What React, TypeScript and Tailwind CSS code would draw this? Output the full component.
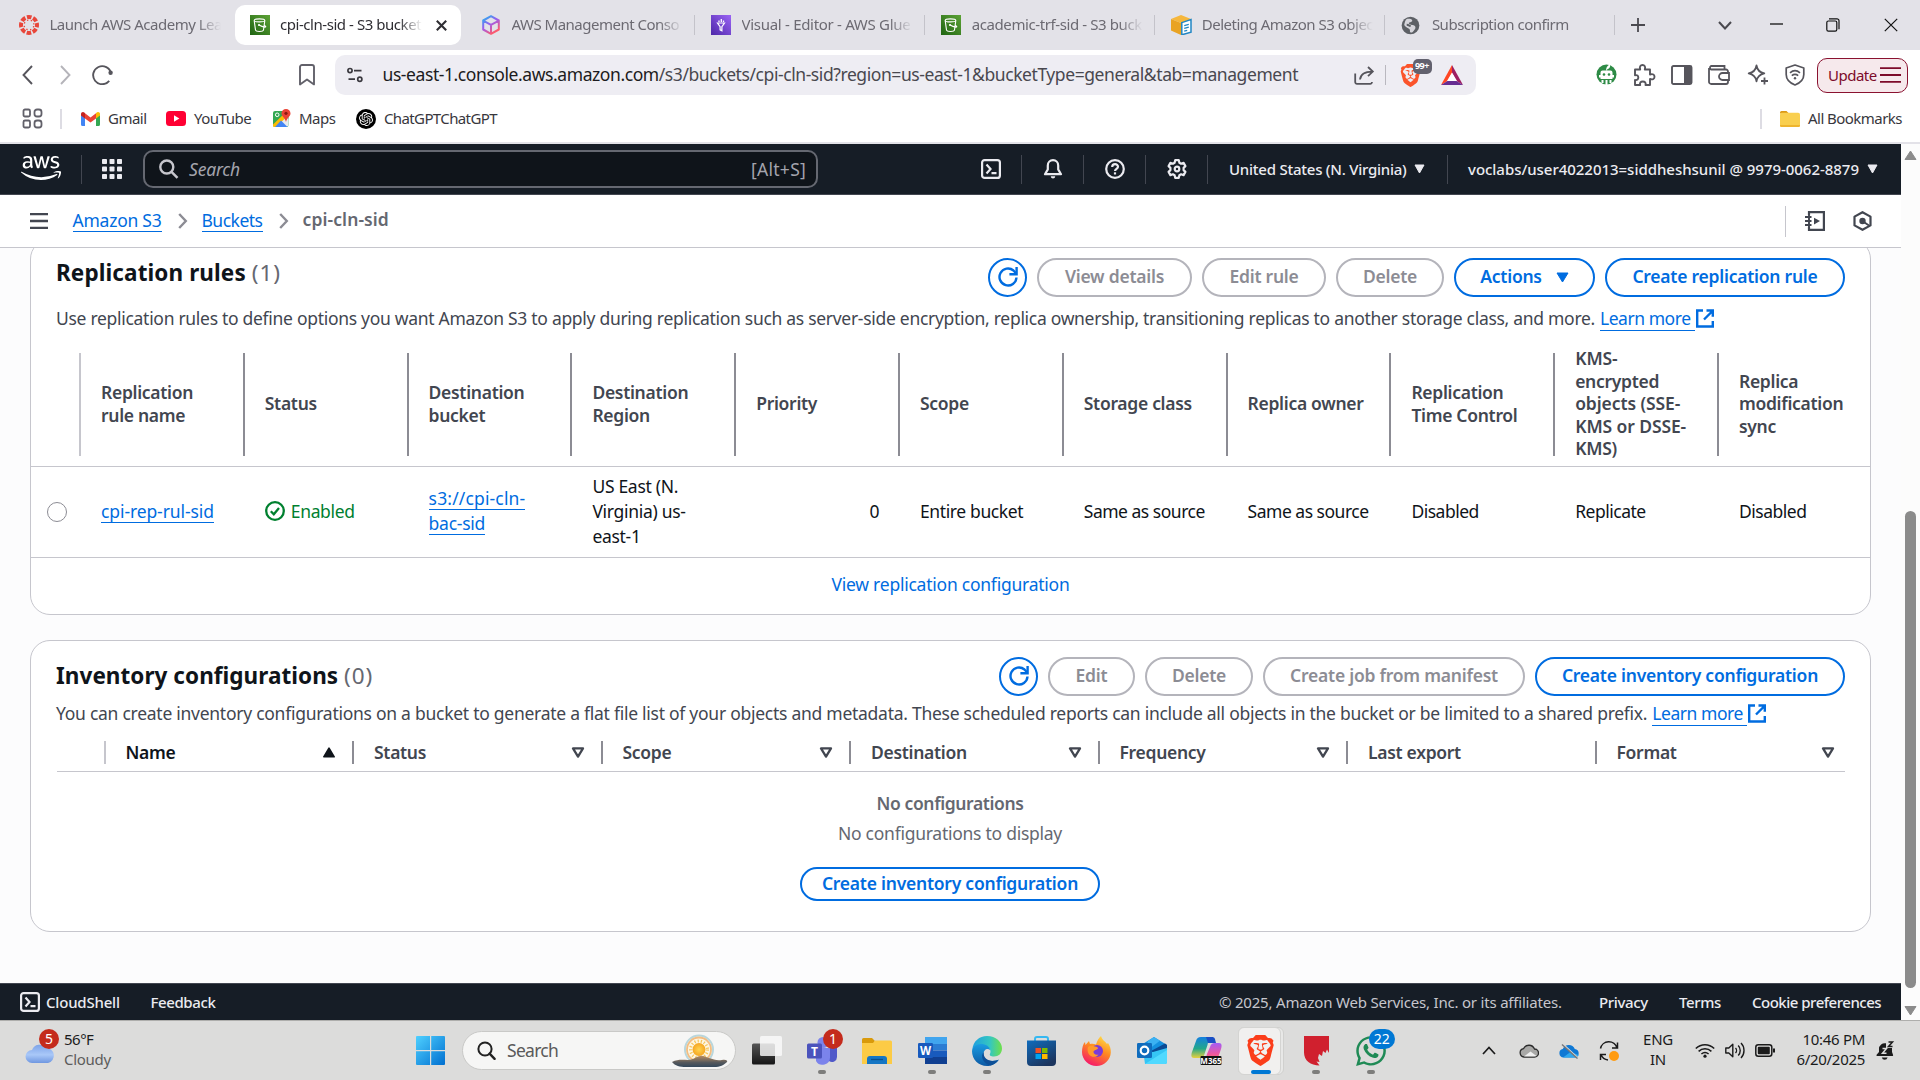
import type { ReactNode } from 'react';
import { FaAws, FaWhatsapp } from 'react-icons/fa6';
import { SiBrave, SiOpenai } from 'react-icons/si';

/* ---------- favicons ---------- */

const CanvasIcon = () => (
  <svg width="20" height="20" viewBox="0 0 20 20" fill="none">
    <circle cx="10" cy="10" r="8" stroke="#e8463a" strokeWidth="4" strokeDasharray="4.6 1.68" strokeDashoffset="2.3" />
    <circle cx="10" cy="10" r="4.9" stroke="#e8463a" strokeWidth="1.3" strokeDasharray="1.3 2.55" strokeDashoffset="2.6" />
  </svg>
);

const BucketIcon = () => (
  <svg width="20" height="20" viewBox="0 0 20 20" fill="none">
    <defs>
      <linearGradient id="bk" x1="0" y1="1" x2="1" y2="0">
        <stop stopColor="#1f6412" />
        <stop offset="1" stopColor="#5da336" />
      </linearGradient>
    </defs>
    <rect width="20" height="20" fill="url(#bk)" />
    <ellipse cx="9.5" cy="5.4" rx="5.3" ry="1.5" stroke="#fff" strokeWidth="1.1" />
    <path d="M4.2 5.6l1.3 9.4c.3 1.9 7.7 1.9 8 0l1.3-9.4" stroke="#fff" strokeWidth="1.1" />
    <path d="M8.5 9.8c2 1.2 4.5 2.2 6.5 2.3 1.4 0 .8-1.2-.9-1.9" stroke="#fff" strokeWidth="1.1" />
    <circle cx="9" cy="10" r="1" fill="#fff" />
  </svg>
);

const ConsoleIcon = () => (
  <svg width="20" height="20" viewBox="0 0 20 20" fill="none">
    <defs>
      <linearGradient id="cs" x1="0" y1="0" x2=".6" y2="1">
        <stop stopColor="#18b8f0" />
        <stop offset=".5" stopColor="#9a5cf0" />
        <stop offset="1" stopColor="#ff5a6a" />
      </linearGradient>
    </defs>
    <path d="M10 1.2l7.8 4.3v9L10 18.8 2.2 14.5v-9z M2.6 5.8l7.4 4 7.4-4M10 9.8v8.6" stroke="url(#cs)" strokeWidth="2" strokeLinejoin="round" />
  </svg>
);

const GlueIcon = () => (
  <svg width="20" height="20" viewBox="0 0 20 20" fill="none">
    <defs>
      <linearGradient id="gl" x1="0" y1="1" x2="1" y2="0">
        <stop stopColor="#4d27a8" />
        <stop offset="1" stopColor="#9b63f5" />
      </linearGradient>
    </defs>
    <rect width="20" height="20" fill="url(#gl)" />
    <path d="M6.5 8h7l-2.6 3.600v4.200l-1.800-.9v-3.300z" stroke="#fff" strokeWidth="1.2" />
    <path d="M8 5.500v1.500M10.300 4v3M12.500 5.500v1.500" stroke="#fff" strokeWidth="1.300" />
  </svg>
);

const DocsIcon = () => (
  <svg width="21" height="20" viewBox="0 0 21 20">
    <path d="M10 0l10 4-10 4L0 4z" fill="#f6b73c" />
    <path d="M0 4l10 4v12L0 15.5z" fill="#e9a323" />
    <path d="M10 8l10-4v6H10z" fill="#f0ab2c" />
    <path d="M10.8 7.6L20 4.6v12.6l-9.2 2.6z" fill="#fff" stroke="#2286c3" strokeWidth="1.5" />
    <path d="M13.2 10.6l4.6-1.2M13.2 13.4l4.6-1.2M13.2 16.2l3-.8" stroke="#2286c3" strokeWidth="1.3" />
  </svg>
);

const GlobeIcon = () => (
  <svg width="19" height="19" viewBox="0 0 20 20">
    <circle cx="10" cy="10" r="9.3" fill="#5d6065" />
    <path d="M6 3.2c2-.6 5-.2 5.8 1.2.5 1.6-1.7 1.8-3 2.4-1.5.8.2 2 1.8 2.3 2.4.3 5 1 4.6 3.4-.3 1.6-1.8 2.8-3.2 4.6-1 .6-2.6.2-2.6-.6.2-1.6 0-2.7-1.4-3.4-1.8-1-3.8-2-4.6-3.6C3.8 7 4.5 4 6 3.2z" fill="#e3e2e8" opacity=".9" />
    <path d="M6 9.2c2 0 3 1.2 4.2 1.5" stroke="#5d6065" strokeWidth="2" fill="none" />
  </svg>
);

/* ---------- browser chrome ---------- */

function Tab({ icon, title, tone, sep }: { icon: ReactNode; title: string; tone: string; sep?: boolean }) {
  return (
    <div className="flex h-full w-[230.1px] shrink-0 items-center pl-4">
      <div className="w-[30.500px] shrink-0">{icon}</div>
      <div className={`-mt-px w-[171.500px] shrink-0 overflow-hidden whitespace-nowrap text-[15px] text-[#6c6a72] [mask-image:linear-gradient(to_right,black_86%,transparent)] ${tone}`}>{title}</div>
      {sep && <div className="ml-[11px] h-5 w-px shrink-0 bg-[#c4c3ca]" />}
    </div>
  );
}

function TabStrip() {
  return (
    <div className="flex h-[50px] items-center bg-[#e3e2e8]">
      <div className="h-full w-[235px] shrink-0 pl-[3px]">
        <Tab icon={<CanvasIcon />} title="Launch AWS Academy Lea" tone="tracking-[-0.5px]" />
      </div>
      <div className="flex h-10 w-[226px] shrink-0 items-center rounded-[10px] bg-white pl-[15px]">
        <div className="w-[30px] shrink-0"><BucketIcon /></div>
        <div className="-mt-px w-[142px] overflow-hidden whitespace-nowrap text-[15px] tracking-[-0.45px] text-[#2f2e33] [mask-image:linear-gradient(to_right,black_84%,transparent)]">cpi-cln-sid - S3 bucket</div>
        <svg className="ml-[14px]" width="11" height="11" viewBox="0 0 11 11" stroke="#2f2e33" strokeWidth="2.1"><path d="M.8.8l9.4 9.4M10.2.8L.8 10.2" /></svg>
      </div>
      <div className="w-[4px] shrink-0" />
      <Tab icon={<ConsoleIcon />} title="AWS Management Conso" tone="tracking-[-0.5px]" sep />
      <Tab icon={<GlueIcon />} title="Visual - Editor - AWS Glue" tone="tracking-[-0.3px]" sep />
      <Tab icon={<BucketIcon />} title="academic-trf-sid - S3 buck" tone="tracking-[-0.4px]" sep />
      <Tab icon={<DocsIcon />} title="Deleting Amazon S3 objec" tone="tracking-[-0.5px]" sep />
      <Tab icon={<GlobeIcon />} title="Subscription confirm" tone="tracking-[-0.49px]" sep />
      <svg className="ml-4 shrink-0" width="14" height="14" viewBox="0 0 14 14" stroke="#4a494f" strokeWidth="1.8"><path d="M7 0v14M0 7h14" /></svg>
      <svg className="ml-[73px] shrink-0" width="14" height="9" viewBox="0 0 14 9" fill="none" stroke="#4a494f" strokeWidth="2"><path d="M1 1l6 6.5L13 1" /></svg>
      <svg className="-mt-[3px] ml-[38px] shrink-0" width="13" height="2" viewBox="0 0 13 2"><path d="M0 1h13" stroke="#111" strokeWidth="1.3" /></svg>
      <svg className="ml-[43px] shrink-0" width="14" height="14" viewBox="0 0 14 14" fill="none" stroke="#111" strokeWidth="1.2"><rect x=".8" y="3" width="10" height="10.2" rx="1.6" /><path d="M3 .8h8a2 2 0 012 2v8.4" /></svg>
      <svg className="ml-[44px] shrink-0" width="14" height="14" viewBox="0 0 14 14" stroke="#111" strokeWidth="1.2"><path d="M.8.8l12.4 12.4M13.2.8L.8 13.2" /></svg>
    </div>
  );
}

const BatIcon = () => (
  <svg width="22" height="20" viewBox="0 0 22 20">
    <path d="M11 0L0 20l6.5-4L11 8z" fill="#ff4724" />
    <path d="M11 0l11 20-6.5-4L11 8z" fill="#9e1f63" />
    <path d="M0 20h22l-6.5-4h-9z" fill="#662d91" />
    <path d="M11 7.4l5 8.6H6z" fill="#fff" />
  </svg>
);

function Toolbar() {
  return (
    <div className="flex h-[50px] items-center bg-white">
      <svg className="ml-[22px]" width="11" height="20" viewBox="0 0 11 20" fill="none" stroke="#56555c" strokeWidth="1.9"><path d="M10 1L1.5 10l8.5 9" /></svg>
      <svg className="ml-[27px]" width="11" height="20" viewBox="0 0 11 20" fill="none" stroke="#b5b4ba" strokeWidth="1.9"><path d="M1 1l8.5 9L1 19" /></svg>
      <svg className="ml-[21px]" width="22" height="20" viewBox="0 0 22 20" fill="none" stroke="#56555c" strokeWidth="1.9"><path d="M17.2 15.8A9 9 0 1119 8.5" /><circle cx="18.6" cy="7.8" r="2.2" fill="#56555c" stroke="none" /></svg>
      <svg className="ml-[185px]" width="16" height="22" viewBox="0 0 16 22" fill="none" stroke="#62616a" strokeWidth="1.9"><path d="M1 3a2 2 0 012-2h10a2 2 0 012 2v17.4l-7-5-7 5z" strokeLinejoin="round" /></svg>
      <div className="ml-5 flex h-10 w-[1141px] shrink-0 items-center rounded-[10px] bg-[#eeedf3] pl-[12px]">
        <svg width="16" height="16" viewBox="0 0 16 16" fill="none" stroke="#3a393f" strokeWidth="1.7"><circle cx="3" cy="3.6" r="2.1" /><path d="M7 3.6h7.5M1.5 12.2H8" /><circle cx="12.8" cy="12.2" r="2.1" /></svg>
        <div className="-mt-px ml-[19.500px] w-[971px] whitespace-nowrap text-[17.5px] tracking-[-0.42px] text-[#49484f]"><span className="text-[#1c1b20]">us-east-1.console.aws.amazon.com</span>/s3/buckets/cpi-cln-sid?region=us-east-1&amp;bucketType=general&amp;tab=management</div>
        <svg width="21" height="19" viewBox="0 0 21 19" fill="none" stroke="#56555c" strokeWidth="1.8"><path d="M1.2 7.5V16a1.8 1.8 0 001.8 1.8h13A1.8 1.8 0 0018 16" /><path d="M6 13.5C6.500 8 10 5.600 18.500 5.600M14 1l4.800 4.600L14 10.200" /></svg>
        <div className="ml-[10px] h-5 w-px bg-[#b9b8bf]" />
        <div className="relative ml-[13px]">
          <SiBrave size={23} color="#fb542b" />
          <span className="absolute -top-[5px] left-[14px] flex h-[15px] w-[19px] items-center justify-center rounded-[5px] bg-[#62616e] text-[9px] font-bold tracking-[-0.4px] text-white">99+</span>
        </div>
        <div className="ml-[19px]"><BatIcon /></div>
      </div>
      <svg className="ml-[120px]" width="21" height="22" viewBox="0 0 21 22"><circle cx="10.500" cy="10.500" r="10" fill="#2e8b46" /><path d="M10.200 6.500c-.2-3 1.300-5.500 4-5.800.3 2.600-1.300 4.300-3 4.500v1.300z" fill="#fff" /><path d="M6.500 6.500h8a2 2 0 012 2V11h1.500v2.500h-1.500V15H4.500v-1.500H3V11h1.500V8.500a2 2 0 012-2z" fill="#fff" /><path d="M5.500 16h2v3h-2zM9.500 16h2v5h-2zM13.500 16h2v3h-2z" fill="#fff" /><circle cx="8" cy="10.500" r="1.300" fill="#2e8b46" /><circle cx="13" cy="10.500" r="1.300" fill="#2e8b46" /></svg>
      <svg className="ml-4" width="23" height="22" viewBox="0 0 23 22" fill="none" stroke="#56555c" strokeWidth="1.9"><path d="M2 5.500h5.200C6.200 2.500 7.500 1 9.500 1s3.300 1.500 2.300 4.500H17v5c3-1 4.500.2 4.500 2.200S20 16 17 15v6h-4.500c.6-2.300-.6-3.500-2.700-3.500S6.500 18.700 7.200 21H2v-5c2.300.4 3.300-.8 3.300-2.500S4.300 10.700 2 11.200z" strokeLinejoin="round" /></svg>
      <svg className="ml-[15px]" width="22" height="20" viewBox="0 0 22 20"><rect x="1" y="1" width="19.500" height="18" rx="1.500" fill="none" stroke="#56555c" strokeWidth="1.900" /><path d="M13 1h7v18h-7z" fill="#56555c" /></svg>
      <svg className="ml-[15px]" width="22" height="20" viewBox="0 0 22 20" fill="none" stroke="#56555c" strokeWidth="1.800"><path d="M20 8V6.500a2 2 0 00-2-2H3A2 2 0 013 1h13.500v3M1 3v13.500A2.300 2.300 0 003.300 19H18a2 2 0 002-2v-2" /><path d="M21 8h-6.500a3.500 3.500 0 000 7H21z" /></svg>
      <svg className="ml-[17px]" width="22" height="22" viewBox="0 0 22 22" fill="none" stroke="#56555c" strokeWidth="1.800"><path d="M9.500 1.500c.8 4.800 2.700 6.900 7.800 7.900-5.100 1-7 3.100-7.800 7.900C8.700 12.500 6.800 10.400 1.700 9.400c5.100-1 7-3.100 7.800-7.900z" strokeLinejoin="round" /><path d="M17.500 13.500v7M14 17h7" /></svg>
      <svg className="ml-[16px]" width="20" height="22" viewBox="0 0 20 22" fill="none" stroke="#56555c" strokeWidth="1.700"><path d="M10 1l8.800 3v6.500c0 5-3.800 8.500-8.800 10.500C5 19 1.200 15.500 1.200 10.500V4z" strokeLinejoin="round" /><path d="M5 8.800c3-2.500 7-2.500 10 0M6.800 11.600c2-1.600 4.400-1.600 6.400 0" /><circle cx="10" cy="14.300" r="1.200" fill="#56555c" stroke="none" /></svg>
      <div className="ml-[12px] flex h-[35px] w-[91px] items-center rounded-[10px] border-[1.5px] border-[#8a1230] bg-[#f6e9ec] pl-[10px]">
        <span className="w-[52px] text-[15px] tracking-[-0.5px] text-[#7d0b2a]">Update</span>
        <svg width="21" height="16" viewBox="0 0 21 16" stroke="#7d0b2a" strokeWidth="1.800"><path d="M0 1.200h21M0 8h21M0 14.800h21" /></svg>
      </div>
    </div>
  );
}

function Bookmarks() {
  return (
    <div className="flex h-[44px] items-center border-b-2 border-[#e3e2e8] bg-white pb-[5px] text-[15px] tracking-[-0.5px] text-[#38373d]">
      <svg className="ml-[22px]" width="21" height="21" viewBox="0 0 21 21" fill="none" stroke="#62616a" strokeWidth="1.800"><rect x="1.500" y="1.500" width="6.500" height="7" rx="1.500" /><rect x="12.500" y="1.500" width="7" height="7" rx="2.500" /><rect x="1.500" y="12.500" width="6.500" height="7" rx="1.500" /><rect x="12.500" y="12.500" width="7" height="7" rx="2.500" /></svg>
      <div className="ml-[17px] h-5 w-[2px] bg-[#dddce3]" />
      <svg className="ml-[19px]" width="19" height="14" viewBox="0 0 19 14"><path d="M0 1.500v11A1.500 1.500 0 001.500 14H4V3.200z" fill="#4285f4" /><path d="M15 3.200V14h2.500a1.500 1.500 0 001.500-1.500v-11z" fill="#34a853" /><path d="M15 1.200v5.200l4-3V2c0-2-2.200-2.600-3.600-1.300z" fill="#fbbc04" /><path d="M4 6.400V1.200l5.500 4.200L15 1.200v5.200l-5.500 4.200z" fill="#ea4335" /><path d="M0 2v1.400l4 3V1.200L3.600.7C2.200-.6 0 0 0 2z" fill="#c5221f" /></svg>
      <span className="ml-[8px] w-[58px]">Gmail</span>
      <svg width="20" height="15" viewBox="0 0 20 15"><rect width="20" height="15" rx="3.500" fill="#ff0033" /><path d="M8 4.300l5.400 3.200L8 10.700z" fill="#fff" /></svg>
      <span className="ml-[8px] w-[79px]">YouTube</span>
      <svg width="18" height="19" viewBox="0 0 18 19"><rect y="2" width="15.500" height="16" rx="2" fill="#34a853" /><path d="M1 18L12 7l3.500 3v6.500l-2 1.500z" fill="#e8eaed" /><path d="M0 15.500L12.500 3.500l2.500 3.300L3 18H1.500A1.500 1.500 0 010 16.500z" fill="#fbbc04" /><path d="M8 11.500l6.500 6.500H2z" fill="#4285f4" /><circle cx="4.200" cy="5.800" r="1.800" fill="none" stroke="#fff" /><path d="M13 0a4.500 4.500 0 00-4.500 4.500C8.500 7.500 12 8.500 13 13c1-4.500 4.500-5.500 4.500-8.500A4.500 4.500 0 0013 0z" fill="#ea4335" /><circle cx="13" cy="4.300" r="1.600" fill="#8c1a10" /></svg>
      <span className="ml-[8px] w-[57px]">Maps</span>
      <div className="flex size-5 items-center justify-center rounded-full bg-black"><SiOpenai size={14} color="#fff" /></div>
      <span className="ml-[8px] tracking-[-0.62px]">ChatGPTChatGPT</span>
      <div className="ml-auto h-5 w-[2px] bg-[#dddce3]" />
      <svg className="ml-[18px]" width="20" height="16" viewBox="0 0 20 16"><path d="M0 1.500A1.500 1.500 0 011.500 0h5L9 2.500H0z" fill="#dc9a15" /><rect y="1.800" width="20" height="14.200" rx="1.800" fill="#f9cf4f" /><path d="M0 14h20v.5a1.500 1.500 0 01-1.500 1.500h-17A1.500 1.500 0 010 14.500z" fill="#eeb52f" /></svg>
      <span className="mr-[18px] ml-[8px] w-[94px] whitespace-nowrap tracking-[-0.54px]">All Bookmarks</span>
    </div>
  );
}

/* ---------- console header ---------- */

const ShellIcon = () => (
  <svg width="20" height="20" viewBox="0 0 20 20" fill="none" stroke="#ebebf0" strokeWidth="2.200"><rect x="1.100" y="1.100" width="17.800" height="17.800" rx="2.500" /><path d="M5.500 5.500L9.500 10l-4 4.500M10.500 14.200h5" /></svg>
);
const Sep = ({ className }: { className: string }) => <div className={`h-[29px] w-px shrink-0 bg-[#424650] ${className}`} />;
const Caret = ({ color = '#ebebf0' }: { color?: string }) => (
  <svg width="11" height="10" viewBox="0 0 11 10"><path d="M1 1h9L5.500 9z" fill={color} stroke={color} strokeLinejoin="round" /></svg>
);

function ConsoleHeader() {
  return (
    <div className="flex h-[51px] items-center border-b border-[#424650] bg-[#161d26] text-[15px] font-medium text-[#ebebf0]">
      <FaAws className="-mt-[2px] ml-[21px]" size={40} color="#fff" />
      <Sep className="ml-[20px]" />
      <svg className="ml-[20px]" width="20" height="20" viewBox="0 0 20 20" fill="#ebebf0">
        {[0, 7.5, 15].map((y) => [0, 7.5, 15].map((x) => <rect key={`${x}-${y}`} x={x} y={y} width="5" height="5" rx=".8" />))}
      </svg>
      <div className="ml-[21px] flex h-[38px] w-[675px] items-center rounded-[10px] border-2 border-[#656871] bg-[#0f141a] pr-[10px] pl-[14px] text-[17.5px] font-normal text-[#a4a4ad]">
        <svg width="20" height="20" viewBox="0 0 20 20" fill="none" stroke="#c6c6cd" strokeWidth="2.400"><circle cx="7.800" cy="8" r="6.500" /><path d="M12.500 12.800l6 6" /></svg>
        <span className="ml-[10px] italic tracking-[-0.2px]">Search</span>
        <span className="ml-auto tracking-[0.25px]">[Alt+S]</span>
      </div>
      <div className="ml-[163px]"><ShellIcon /></div>
      <Sep className="ml-5" />
      <svg className="ml-[21px]" width="20" height="20" viewBox="0 0 20 20" fill="none" stroke="#ebebf0" strokeWidth="2.200" strokeLinejoin="round"><path d="M10 1.200c-3 0-5.200 2.200-5.200 5.200v4L2 15.200h16l-2.800-4.800v-4c0-3-2.200-5.200-5.200-5.200z" /><path d="M7.800 16.500c0 3 4.400 3 4.400 0z" fill="#ebebf0" stroke="none" transform="translate(0 .8)" /></svg>
      <Sep className="ml-5" />
      <svg className="ml-[21px]" width="20" height="20" viewBox="0 0 20 20" fill="none" stroke="#ebebf0" strokeWidth="2.200"><circle cx="10" cy="10" r="8.800" /><path d="M7.200 8c0-3.800 5.800-3.600 5.800-.3 0 2-3 2.200-3 4.300" /><path d="M10 13.300v2.200" /></svg>
      <Sep className="ml-5" />
      <svg className="ml-[21px]" width="20" height="20" viewBox="0 0 20 20" fill="none" stroke="#ebebf0" strokeWidth="2.200" strokeLinejoin="round"><path d="M8.200 1.200h3.600l.6 2.500 1.700 1 2.500-.8 1.800 3.200-1.800 1.800v2.200l1.800 1.800-1.800 3.200-2.500-.8-1.700 1-.6 2.500H8.200l-.6-2.500-1.700-1-2.500.8-1.800-3.200 1.800-1.800V8.900L1.600 7.100l1.800-3.200 2.500.8 1.700-1z" /><circle cx="10" cy="10" r="2.300" /></svg>
      <Sep className="ml-5" />
      <span className="ml-[21px] w-[185px] whitespace-nowrap tracking-[-0.24px]">United States (N. Virginia)</span>
      <Caret />
      <Sep className="ml-[22px]" />
      <span className="ml-[20px] w-[399px] whitespace-nowrap tracking-[-0.03px]">voclabs/user4022013=siddheshsunil @ 9979-0062-8879</span>
      <Caret />
    </div>
  );
}

const Chevron = () => (
  <svg width="10" height="16" viewBox="0 0 10 16" fill="none" stroke="#8c8c94" strokeWidth="2.400"><path d="M1.200 1l6.600 7-6.600 7" /></svg>
);

function Breadcrumbs() {
  return (
    <div className="flex h-[53px] items-center border-b border-[#c6c6cd] bg-white text-[17.5px]">
      <svg className="ml-[30px]" width="18" height="16" viewBox="0 0 18 16" stroke="#424650" strokeWidth="2.300"><path d="M0 1.200h18M0 8h18M0 14.800h18" /></svg>
      <a className="-mt-px ml-[24.500px] w-[89px] border-b border-[#006ce0] leading-[21px] whitespace-nowrap tracking-[-0.24px] text-[#006ce0]">Amazon S3</a>
      <div className="ml-[16px]"><Chevron /></div>
      <a className="-mt-px ml-[14px] w-[61px] border-b border-[#006ce0] leading-[21px] whitespace-nowrap tracking-[-0.5px] text-[#006ce0]">Buckets</a>
      <div className="ml-[16px]"><Chevron /></div>
      <span className="-mt-[3px] ml-[14px] font-semibold tracking-[0.1px] text-[#656871]">cpi-cln-sid</span>
      <div className="ml-auto h-[31px] w-px bg-[#c6c6cd]" />
      <svg className="ml-[19px]" width="20" height="20" viewBox="0 0 20 20" fill="none" stroke="#424650" strokeWidth="2.200"><path d="M4 4V1.100h14.900v17.800H4V16" /><path d="M0 6h6.500M0 10h6.500M0 14h6.500M4 4v12" strokeWidth="1.900" /><path d="M9 6.800l6 3.200-6 3.400z" fill="#424650" stroke="none" /></svg>
      <svg className="mr-[29px] ml-[28px]" width="19" height="20" viewBox="0 0 19 20" fill="none" stroke="#424650" strokeWidth="2.200" strokeLinejoin="round"><path d="M9.500 1.200l8 4.400v8.800l-8 4.400-8-4.400V5.600z" /><circle cx="9.500" cy="10" r="3.200" fill="#424650" stroke="none" /><path d="M10 10.500l6 4" strokeWidth="2" /></svg>
    </div>
  );
}

/* ---------- page content ---------- */

function Btn({ children, w, primary, small }: { children: ReactNode; w: string; primary?: boolean; small?: boolean }) {
  return (
    <button className={`flex shrink-0 items-center justify-center rounded-[20px] border-[2px] pb-px text-[17.5px] leading-none font-semibold whitespace-nowrap tracking-[-0.24px] ${small ? 'h-[34px]' : 'h-[39px]'} ${w} ${primary ? 'border-[#006ce0] text-[#006ce0]' : 'border-[#b4b4bb] text-[#8c8c94]'}`}>
      {children}
    </button>
  );
}

const RefreshBtn = () => (
  <button className="flex size-[39px] shrink-0 items-center justify-center rounded-full border-2 border-[#006ce0]">
    <svg className="-mt-px" width="20" height="20" viewBox="0 0 20 20" fill="none" stroke="#006ce0" strokeWidth="2.400"><path d="M18.500 10.500a8.500 8.500 0 11-3-7l2.500 2.800" /><path d="M18.600 0v7.200h-7.200" /></svg>
  </button>
);

const LearnMore = () => (
  <a className="ml-[5px] inline-flex text-[#006ce0]">
    <span className="h-[25px] w-[95px] border-b border-[#006ce0] tracking-[-0.45px]">Learn more</span>
    <svg className="mt-[3px] ml-[1px]" width="18" height="19" viewBox="0 0 18 19" fill="none" stroke="#006ce0" strokeWidth="2.400"><path d="M7 1.500H1.200v16h15.600V12M10.500 1.500h6.300v6.300M16.500 2L8 10.500" /></svg>
  </a>
);

function Th({ children, first, line }: { children: ReactNode; first?: boolean; line: string }) {
  return (
    <div className={`flex items-center border-l-2 pl-5 ${line} ${first ? 'border-[#c6c6cd]' : 'border-[#8c8c94]'}`}>{children}</div>
  );
}

const headings: string[][] = [
  ['Replication', 'rule name'], ['Status'], ['Destination', 'bucket'], ['Destination', 'Region'], ['Priority'], ['Scope'],
  ['Storage class'], ['Replica owner'], ['Replication', 'Time Control'],
  ['KMS-', 'encrypted', 'objects (SSE-', 'KMS or DSSE-', 'KMS)'], ['Replica', 'modification', 'sync'],
];

const link = 'w-fit border-b border-[#006ce0] leading-[22px] text-[#006ce0]';

function ReplicationCard() {
  return (
    <section className="flex h-[376px] flex-col rounded-[20px] border border-[#c6c6cd] bg-white">
      <div className="mt-[18px] flex h-[40px] items-start pr-[25px] pl-[25px]">
        <h2 className="text-[22.5px] leading-[30px] font-bold tracking-[0.1px] text-[#0f141a]">Replication rules <span className="font-normal tracking-[1px] text-[#656871]">(1)</span></h2>
        <div className="ml-auto flex gap-[10px]">
          <RefreshBtn />
          <Btn w="w-[155px]">View details</Btn>
          <Btn w="w-[124px]">Edit rule</Btn>
          <Btn w="w-[108px]">Delete</Btn>
          <Btn w="w-[141px]" primary><span className="mr-[14px]">Actions</span><svg width="13" height="11" viewBox="0 0 13 11"><path d="M1 1h11L6.500 10z" fill="#006ce0" stroke="#006ce0" strokeLinejoin="round" /></svg></Btn>
          <Btn w="w-[240px]" primary>Create replication rule</Btn>
        </div>
      </div>
      <p className="mt-[8px] flex h-[25px] pl-[25px] leading-[25px] whitespace-nowrap tracking-[-0.295px] text-[#424650]">
        Use replication rules to define options you want Amazon S3 to apply during replication such as server-side encryption, replica ownership, transitioning replicas to another storage class, and more. <LearnMore />
      </p>
      <div className="mt-[14px] grid h-[122px] grid-cols-[48px_repeat(10,163.800px)_1fr] border-b border-[#c6c6cd] leading-[22.400px] font-semibold tracking-[-0.3px] text-[#424650]">
        <div />
        {headings.map((h, i) => (
          <Th key={i} first={i === 0} line="mt-[8px] h-[103px] pb-[2px]"><div className="whitespace-nowrap">{h.map((l) => <div key={l} className={l.endsWith('-') ? 'tracking-[-0.1px]' : ''}>{l}</div>)}</div></Th>
        ))}
      </div>
      <div className="grid h-[91px] grid-cols-[48px_repeat(10,163.800px)_1fr] items-center border-b border-[#c6c6cd] pb-[2px] leading-[25px] whitespace-nowrap tracking-[-0.49px] text-[#0f141a]">
        <div className="mt-px ml-[16px] size-5 rounded-full border border-[#8c8c94]" />
        <div className="pl-[22px] tracking-[-0.1px]"><div className={link}>cpi-rep-rul-sid</div></div>
        <div className="flex items-center gap-[6px] pl-[22px] tracking-[-0.35px] text-[#00802f]">
          <svg width="20" height="20" viewBox="0 0 20 20" fill="none" stroke="#00802f" strokeWidth="2.300"><circle cx="10" cy="10" r="8.800" /><path d="M5.800 10.200l3 3L14 7" /></svg>Enabled
        </div>
        <div className="flex flex-col gap-[2px] pl-[22px]"><div className={`tracking-[0.15px] ${link}`}>s3://cpi-cln-</div><div className={`tracking-[-0.25px] ${link}`}>bac-sid</div></div>
        <div className="pl-[22px] tracking-[-0.3px]">US East (N.<br />Virginia) us-<br />east-1</div>
        <div className="pr-[19px] text-right">0</div>
        <div className="pl-[22px] tracking-[-0.38px]">Entire bucket</div>
        <div className="pl-[22px]">Same as source</div>
        <div className="pl-[22px]">Same as source</div>
        <div className="pl-[22px]">Disabled</div>
        <div className="pl-[22px]">Replicate</div>
        <div className="pl-[22px]">Disabled</div>
      </div>
      <div className="pt-[14px] text-center leading-[25px] tracking-[-0.24px] text-[#006ce0]">View replication configuration</div>
    </section>
  );
}

const invCols: [string, string][] = [
  ['Name', 'up'], ['Status', 'down'], ['Scope', 'down'], ['Destination', 'down'], ['Frequency', 'down'], ['Last export', ''], ['Format', 'down'],
];

function InventoryCard() {
  return (
    <section className="mt-[25px] flex h-[292px] flex-col rounded-[20px] border border-[#c6c6cd] bg-white">
      <div className="mt-[16px] flex h-[40px] items-start pr-[25px] pl-[25px]">
        <h2 className="mt-[4px] text-[22.5px] leading-[30px] font-bold tracking-[0.05px] text-[#0f141a]">Inventory configurations <span className="font-normal tracking-[0.900px] text-[#656871]">(0)</span></h2>
        <div className="ml-auto flex gap-[10px]">
          <RefreshBtn />
          <Btn w="w-[87px]">Edit</Btn>
          <Btn w="w-[108px]">Delete</Btn>
          <Btn w="w-[262px]">Create job from manifest</Btn>
          <Btn w="w-[310px]" primary>Create inventory configuration</Btn>
        </div>
      </div>
      <p className="mt-[4px] flex h-[25px] pl-[25px] leading-[25px] whitespace-nowrap tracking-[-0.265px] text-[#424650]">
        You can create inventory configurations on a bucket to generate a flat file list of your objects and metadata. These scheduled reports can include all objects in the bucket or be limited to a shared prefix. <LearnMore />
      </p>
      <div className="mr-[25px] ml-[26px] grid h-[46px] grid-cols-[46.500px_repeat(6,248.500px)_1fr] items-center border-b border-[#c6c6cd] pt-[8px] font-semibold text-[#424650]">
        <div />
        {invCols.map(([name, sort], i) => (
          <Th key={name} first={i === 0} line="h-[23px]">
            <span className={`-mt-px leading-[23px] tracking-[-0.3px] ${i === 0 ? 'text-[#0f141a]' : ''}`}>{name}</span>
            {sort && (
              <svg className={`ml-auto ${i === 6 ? 'mr-[10px]' : 'mr-[16px]'}`} width="14" height="11" viewBox="0 0 14 11" strokeLinejoin="round" strokeWidth="2.300">
                {sort === 'up' ? <path d="M7 1.200l5.200 8.600H1.800z" fill="#0f141a" stroke="#0f141a" strokeWidth="1.600" /> : <path d="M7 9.600L2 1.400h10z" fill="none" stroke="#424650" />}
              </svg>
            )}
          </Th>
        ))}
      </div>
      <div className="mt-[19px] flex flex-col items-center pr-px text-[#656871]">
        <div className="leading-[25px] font-semibold tracking-[-0.4px]">No configurations</div>
        <div className="mt-[5px] mb-[21px] leading-[25px] tracking-[-0.26px]">No configurations to display</div>
        <Btn w="w-[300px]" primary small>Create inventory configuration</Btn>
      </div>
    </section>
  );
}

function Footer() {
  return (
    <div className="flex h-[37px] items-center border-t border-[#424650] bg-[#161d26] text-[15px] font-medium whitespace-nowrap text-[#ebebf0]">
      <div className="ml-[20px]"><ShellIcon /></div>
      <span className="ml-[6px] w-[104.500px] tracking-[-0.2px]">CloudShell</span>
      <span className="tracking-[-0.4px]">Feedback</span>
      <span className="ml-auto w-[380px] font-normal tracking-[-0.2px] text-[#c6c6cd]">© 2025, Amazon Web Services, Inc. or its affiliates.</span>
      <span className="w-[80px] tracking-[-0.35px]">Privacy</span>
      <span className="w-[73px] tracking-[-0.4px]">Terms</span>
      <span className="mr-[19px] w-[130px] tracking-[-0.5px]">Cookie preferences</span>
    </div>
  );
}

/* ---------- taskbar ---------- */

function Cell({ children, dot, badge, badgeCls, active }: { children: ReactNode; dot?: boolean; badge?: string; badgeCls?: string; active?: boolean }) {
  return (
    <div className="relative flex h-full w-[54.900px] shrink-0 items-center justify-center">
      {active && <div className="absolute top-[6px] left-[4px] h-[48px] w-[46px] rounded-[6px] border border-[#d0d0ce] bg-[#e8e8e7]" />}
      {active && <div className="absolute top-[6px] left-[4px] h-[48px] w-[43px] rounded-[6px] border border-[#d4d4d2] bg-[#f1f0ef]" />}
      <div className="relative flex items-center justify-center">{children}</div>
      {dot && <div className="absolute bottom-[6px] h-[4px] w-[8px] rounded-full bg-[#7d7d7b]" />}
      {active && <div className="absolute bottom-[6px] left-[17px] h-[4px] w-[20px] rounded-full bg-[#0078d4]" />}
      {badge && <span className={`absolute top-[8px] flex h-[20px] items-center justify-center rounded-full text-[14px] leading-none text-white ${badgeCls}`}>{badge}</span>}
    </div>
  );
}

function Taskbar() {
  return (
    <div className="flex h-[60px] items-center border-t border-[#aeaeac] bg-[#dcdcdb] text-[15px]">
      <div className="relative ml-[25px] w-[30px]">
        <svg className="mt-[4px]" width="30" height="20" viewBox="0 0 30 20"><defs><linearGradient id="cl" x1="0" y1="0" x2="0" y2="1"><stop stopColor="#7ea4e8" /><stop offset=".55" stopColor="#a9c8f8" /><stop offset="1" stopColor="#6f97e0" /></linearGradient></defs><path d="M7 20a6.500 6.500 0 010-13A8 8 0 0121 5a7.600 7.600 0 012 15z" fill="url(#cl)" /></svg>
        <span className="absolute -top-[10px] left-[14px] flex size-[20px] items-center justify-center rounded-full bg-[#c42b1c] text-[14px] text-white">5</span>
      </div>
      <div className="-mt-[4px] ml-[9px] w-[352px] leading-[20px]">
        <div className="tracking-[-0.5px] text-[#1b1b1b]">56°F</div>
        <div className="tracking-[-0.3px] text-[#5c5c5c]">Cloudy</div>
      </div>
      <svg width="29" height="29" viewBox="0 0 29 29"><defs><linearGradient id="wn" x1="0" y1="0" x2="1" y2="1"><stop stopColor="#4fd0ff" /><stop offset="1" stopColor="#006fd0" /></linearGradient></defs><path d="M1 0h13v14H0V1a1 1 0 011-1zM15.200 0H28a1 1 0 011 1v13H15.200zM0 15.200h14V29H1a1 1 0 01-1-1zM15.200 15.200H29V28a1 1 0 01-1 1H15.200z" fill="url(#wn)" /></svg>
      <div className="ml-[17px] flex h-[39px] w-[274px] shrink-0 items-center rounded-full border border-[#c9c9c7] bg-[#f6f6f5] pl-[14px]">
        <svg width="19" height="19" viewBox="0 0 19 19" fill="none" stroke="#222" strokeWidth="2"><circle cx="8" cy="8" r="6.600" /><path d="M12.600 12.600l5 5.200" strokeWidth="2.400" strokeLinecap="round" /></svg>
        <span className="ml-[11px] text-[17.5px] tracking-[-0.7px] text-[#5a5a5a]">Search</span>
        <svg className="mr-[7px] ml-auto" width="56" height="34" viewBox="0 0 56 34"><defs><radialGradient id="sn"><stop stopColor="#ffd34d" /><stop offset="1" stopColor="#f5a623" /></radialGradient><linearGradient id="hl" x1="0" y1="0" x2="0" y2="1"><stop stopColor="#b98d62" /><stop offset=".6" stopColor="#56595c" /><stop offset="1" stopColor="#33485c" /></linearGradient></defs><circle cx="27" cy="15.500" r="14" fill="#fdf6e3" stroke="#b9d6dc" strokeWidth="2" /><circle cx="27" cy="15.500" r="12" fill="none" stroke="#f3bd82" strokeWidth="1.800" /><circle cx="27" cy="15.500" r="8.500" stroke="#f6c65b" strokeWidth="3" strokeDasharray="1.200 2" fill="none" /><circle cx="27" cy="15.500" r="6.500" fill="url(#sn)" /><path d="M0 28c6-3 11-2 16-2s7-3 12-4c3-1 5 1 9 2 5 1 7 3 13 2 4-1 6 1 5 2-3 3-7 5-13 5H14C8 33 3 32 0 28z" fill="url(#hl)" /></svg>
      </div>
      <div className="ml-[4px] flex h-full">
        <Cell><svg width="30" height="29" viewBox="0 0 30 29"><defs><linearGradient id="tv" x1="0" y1="0" x2="0" y2="1"><stop stopColor="#555" /><stop offset="1" stopColor="#161616" /></linearGradient></defs><rect y="7.500" width="23" height="21" rx="1.500" fill="url(#tv)" /><rect x="8" width="22" height="20" rx="1.500" fill="#fafafa" opacity=".82" /></svg></Cell>
        <Cell dot badge="1" badgeCls="left-[28px] w-[20px] bg-[#c42b1c]"><svg width="30" height="28" viewBox="0 0 30 28"><circle cx="16" cy="5.500" r="5.500" fill="#7b83eb" /><circle cx="25.500" cy="8" r="3.500" fill="#5059c9" /><path d="M20 11h10v9a5 5 0 01-8 4z" fill="#5059c9" /><path d="M9 11h14v9a7.500 7.500 0 01-14 4z" fill="#7b83eb" /><rect y="6.500" width="15" height="15" rx="1.500" fill="#4b53bc" /><text x="7.500" y="18.500" textAnchor="middle" fill="#fff" fontSize="12" fontWeight="700" fontFamily="Open Sans">T</text></svg></Cell>
        <Cell><svg width="30" height="26" viewBox="0 0 30 26"><path d="M0 1.500A1.500 1.500 0 011.500 0H10l3 3-2 4H0z" fill="#d99a0b" /><path d="M0 5h11l2-2.500h15.500A1.500 1.500 0 0130 4v22H0z" fill="#fccb45" /><path d="M5 26v-5a3 3 0 013-3h14a3 3 0 013 3v5z" fill="#1576c4" /><path d="M9 21.500h12" stroke="#0b4f8d" strokeWidth="1.300" /></svg></Cell>
        <Cell dot><svg width="29" height="27" viewBox="0 0 29 27"><path d="M7 0h22v7H7z" fill="#41a5ee" /><path d="M7 7h22v6.500H7z" fill="#2b7cd3" /><path d="M7 13.500h22V20H7z" fill="#185abd" /><path d="M7 20h22v7H7z" fill="#103f91" /><rect y="6" width="15" height="15" rx="1.300" fill="#185abd" /><text x="7.500" y="17.700" textAnchor="middle" fill="#fff" fontSize="11.500" fontWeight="700" fontFamily="Open Sans">W</text></svg></Cell>
        <Cell dot><svg width="30" height="30" viewBox="0 0 30 30"><defs><linearGradient id="e1" x1="0" y1=".3" x2="1" y2=".3"><stop stopColor="#1f9fe0" /><stop offset=".6" stopColor="#35c7c0" /><stop offset="1" stopColor="#6fe04a" /></linearGradient><linearGradient id="e2" x1="0" y1="0" x2="0" y2="1"><stop stopColor="#1b9de2" /><stop offset="1" stopColor="#0c59a4" /></linearGradient></defs><path d="M.3 14C1 5 7.500 0 15 0c9 0 15 6 15 12.500 0 5-3.500 8-8 8-3.500 0-4.800-1.500-4-2.800C19.500 15.500 18 10 11.500 10 5.500 10 .3 14 .3 14z" fill="url(#e1)" /><path d="M0 15c.5-4 5-7.500 10-7 4.500.4 8 3 8 6-3-2.500-6.500 0-6.500 4 0 5.500 6 9 15.500 5.500-2.500 4-7 6.500-12 6.500C6.500 30 0 23.500 0 15z" fill="url(#e2)" /><path d="M11.700 16c-.8 7 6.300 11 14.500 8-1.500 2.500-4.200 4.500-7.500 5.500C11 28 8 20 11.700 16z" fill="#0d4f97" /></svg></Cell>
        <Cell><svg width="29" height="30" viewBox="0 0 29 30"><defs><linearGradient id="st" x1="0" y1="0" x2=".6" y2="1"><stop stopColor="#0f6cbd" /><stop offset="1" stopColor="#1c355e" /></linearGradient></defs><path d="M8 6V3a2 2 0 012-2h9a2 2 0 012 2v3" fill="none" stroke="#35b8f1" strokeWidth="2" /><path d="M0 4.500h29V26a4 4 0 01-4 4H4a4 4 0 01-4-4z" fill="url(#st)" /><path d="M8.500 12h5.500v5H8.500z" fill="#f25022" /><path d="M15 12h5.500v5H15z" fill="#7fba00" /><path d="M8.500 18h5.500v5H8.500z" fill="#00a4ef" /><path d="M15 18h5.500v5H15z" fill="#ffb900" /></svg></Cell>
        <Cell><svg width="29" height="30" viewBox="0 0 29 30"><defs><linearGradient id="ff" x1=".8" y1="0" x2=".3" y2="1"><stop stopColor="#ffe14a" /><stop offset=".45" stopColor="#ff8a1f" /><stop offset="1" stopColor="#f5156c" /></linearGradient></defs><path d="M19 0c1 4 4 5 6 8l1-1c2 3 3 6 2.800 9.500C28.500 24 22 30 14.500 30S0 24 0 16c0-4 1-8 3-10l.5 3L7 5l1 3c2-.5 4-.5 6 .5 1-3.500 3-7 5-8.500z" fill="url(#ff)" /><circle cx="15" cy="15" r="6" fill="#7a3bd8" /><path d="M6 11c2-2 5-1.500 7-.5 2 .2 3 1 3 1.800-1 2-4 1.500-4.500 3.500 0 2 2 3.500 5 2.700-2 3.500-8 3-10-1-1-2-1.200-4.500-.5-6.500z" fill="#ff9a2a" /></svg></Cell>
        <Cell><svg width="30" height="27" viewBox="0 0 30 27"><path d="M4 8L17 0l13 8v8H4z" fill="#1490df" /><path d="M11 4L17 0l6 3.700L8 15z" fill="#3bb1f2" /><path d="M14 14L28 6.500l2 1.500v7l-10 8z" fill="#0a4a94" /><path d="M6 13l10 2 14-4v14a2 2 0 01-2 2H8z" fill="#35c5f5" /><path d="M8 27L30 13v12a2 2 0 01-2 2z" fill="#50d9ff" /><rect y="6" width="15" height="15" rx="1.300" fill="#0f6cbd" /><circle cx="7.500" cy="13.500" r="3.800" fill="none" stroke="#fff" strokeWidth="2.200" /></svg></Cell>
        <Cell><svg width="31" height="29" viewBox="0 0 31 29"><defs><linearGradient id="m1" x1="0" y1="0" x2="0" y2="1"><stop stopColor="#1480e0" /><stop offset=".55" stopColor="#22a78a" /><stop offset="1" stopColor="#e8d13c" /></linearGradient><linearGradient id="m2" x1="0" y1="0" x2="0" y2="1"><stop stopColor="#a35cf5" /><stop offset=".6" stopColor="#f0589c" /><stop offset="1" stopColor="#ff8a4a" /></linearGradient></defs><path d="M10 1h11c-3 1-3.500 4-4.500 8l-3 9c-1 3-2 4-5 4H3c-3 0-3-3-2-6L5 5c1-3 2-4 5-4z" fill="url(#m1)" /><path d="M15 1h6c3 0 3 2 4 6h-8z" fill="#1a4fc4" /><path d="M24 7h4c3 0 3 3 2 6l-3 9c-1 3-2 4-5 4H11c3-1 4-4 5-8l3-7c1-3 2-4 5-4z" fill="url(#m2)" /><rect x="9.500" y="20" width="21" height="9" rx="1" fill="#111" /><text x="20" y="27.500" textAnchor="middle" fill="#fff" fontSize="8" fontWeight="700" fontFamily="Open Sans">M365</text></svg></Cell>
        <Cell active><div className="-ml-px"><SiBrave size={31} color="#fb3d1a" /></div></Cell>
        <Cell dot><svg width="25" height="30" viewBox="0 0 25 30"><path d="M0 0h25v17l-2-3.500-1.500 3.500-2.500-2-1 5-3-2-1 4 1.500 4-3-.5 3 4c-9 0-15.500-5-15.500-13z" fill="#d0202e" /></svg></Cell>
        <Cell dot badge="22" badgeCls="left-[25px] w-[26px] bg-[#0078d4]"><FaWhatsapp size={34} color="#1f8a55" /></Cell>
      </div>
      <div className="ml-auto flex h-full items-center pr-[25px] text-[#1b1b1b]">
        <div className="flex w-[40px] justify-center"><svg width="14" height="9" viewBox="0 0 14 9" fill="none" stroke="#1b1b1b" strokeWidth="1.700"><path d="M1 8l6-6.500L13 8" /></svg></div>
        <div className="flex w-[40px] justify-center"><svg width="20" height="14" viewBox="0 0 20 14"><path d="M5 13a4.200 4.200 0 01-.5-8.300A6 6 0 0115.500 5 4 4 0 0115.500 13z" fill="#a8a8a6" stroke="#2b2b2b" strokeWidth="1.300" /><path d="M5 12.400l6.500-5 6 4.500-2 .5z" fill="#efefef" /></svg></div>
        <div className="flex w-[40px] justify-center"><svg width="20" height="16" viewBox="0 0 20 16"><path d="M4.500 14.500a4.300 4.300 0 01-.7-8.500A6.500 6.500 0 0115.800 6a4.300 4.300 0 01.4 8.500z" fill="#0f78d4" /><path d="M4 14.500l7.500-5.500 8.200 3c-.7 1.500-2 2.500-3.500 2.500z" fill="#2fa8ef" /><path d="M4 1l15 14" stroke="#dcdcdb" strokeWidth="1.200" /><path d="M3 1.500l15.500 14" stroke="#77777a" strokeWidth="1.400" /></svg></div>
        <div className="flex w-[40px] justify-center"><svg width="20" height="20" viewBox="0 0 20 20" fill="none" stroke="#1b1b1b" strokeWidth="1.500"><path d="M1.500 7.500A8.500 8.500 0 0118 7M18.500 1.500V7h-5.500M9 19a8.500 8.500 0 01-7-5.500M1.500 19v-5.500H7" /><circle cx="15" cy="15" r="5" fill="#ff9b0f" stroke="none" /></svg></div>
        <div className="-mt-[3px] w-[58px] text-center leading-[20px] tracking-[-0.3px]">ENG<br />IN</div>
        <div className="ml-[3px] flex w-[30px] justify-center"><svg width="20" height="15" viewBox="0 0 20 15" fill="none" stroke="#1b1b1b" strokeWidth="1.600"><path d="M.8 5.500c5.300-5 13.100-5 18.400 0M3.600 8.300c3.700-3.400 9.100-3.400 12.800 0M6.400 11c2.100-1.800 5.100-1.800 7.200 0" /><circle cx="10" cy="13.200" r="1.600" fill="#1b1b1b" stroke="none" /></svg></div>
        <div className="flex w-[30px] justify-center"><svg width="20" height="17" viewBox="0 0 20 17" fill="none" stroke="#1b1b1b" strokeWidth="1.400"><path d="M.8 6h3l4-3.700v12.400L3.800 11h-3z" strokeLinejoin="round" /><path d="M10.500 6c1.300 1.300 1.300 3.700 0 5M13.200 3.500c2.700 2.700 2.700 7.300 0 10M16 1c4 4 4 11 0 15" /></svg></div>
        <div className="flex w-[30px] justify-center"><svg width="20" height="13" viewBox="0 0 20 13"><rect x=".8" y=".8" width="16" height="11.400" rx="2.500" fill="none" stroke="#1b1b1b" strokeWidth="1.500" /><rect x="2.800" y="2.800" width="12" height="7.400" rx="1" fill="#1b1b1b" /><path d="M18 4.500h2v4h-2z" fill="#1b1b1b" /></svg></div>
        <div className="-mt-[3px] w-[85px] text-right leading-[20px] tracking-[-0.3px]">10:46 PM<br />6/20/2025</div>
        <svg className="ml-[11px]" width="19" height="20" viewBox="0 0 19 20"><path d="M3 8a5.800 5.800 0 017-5.700V7h6v4l1 2.800c.3.800 0 1.200-.8 1.200H1.400c-.8 0-1.100-.4-.8-1.200L3 11z" fill="#1b1b1b" /><path d="M5.800 16.500a3 3 0 005.800 0z" fill="#1b1b1b" /><path d="M6.500 7.500h4l-4 4.800h4" fill="none" stroke="#dcdcdb" strokeWidth="1.500" /><path d="M12.500 1h4l-4 4.500h4" fill="none" stroke="#1b1b1b" strokeWidth="1.500" /></svg>
      </div>
    </div>
  );
}

export default function App() {
  return (
    <div className="flex h-[1080px] w-[1920px] flex-col overflow-hidden bg-white font-['Noto_Sans',sans-serif]">
      <TabStrip />
      <Toolbar />
      <Bookmarks />
      <div className="flex h-[876px]">
        <div className="flex w-[1901px] flex-col">
          <ConsoleHeader />
          <Breadcrumbs />
          <main className="h-[735px] overflow-hidden bg-[#fcfcfd] pr-[30px] pl-[30px] text-[17.5px]">
            <div className="-mt-[9px]">
              <ReplicationCard />
              <InventoryCard />
            </div>
          </main>
          <Footer />
        </div>
        <div className="flex w-[19px] flex-col items-center bg-[#fcfcfc]">
          <svg className="mt-[6px]" width="13" height="10" viewBox="0 0 13 10"><path d="M6.500 1L12 9.500H1z" fill="#8b8b8b" stroke="#8b8b8b" strokeLinejoin="round" /></svg>
          <div className="mt-[351px] h-[477px] w-[11px] rounded-full bg-[#8b8b8b]" />
          <svg className="mt-[18px]" width="13" height="10" viewBox="0 0 13 10"><path d="M6.500 9L12 .5H1z" fill="#8b8b8b" stroke="#8b8b8b" strokeLinejoin="round" /></svg>
        </div>
      </div>
      <Taskbar />
    </div>
  );
}
